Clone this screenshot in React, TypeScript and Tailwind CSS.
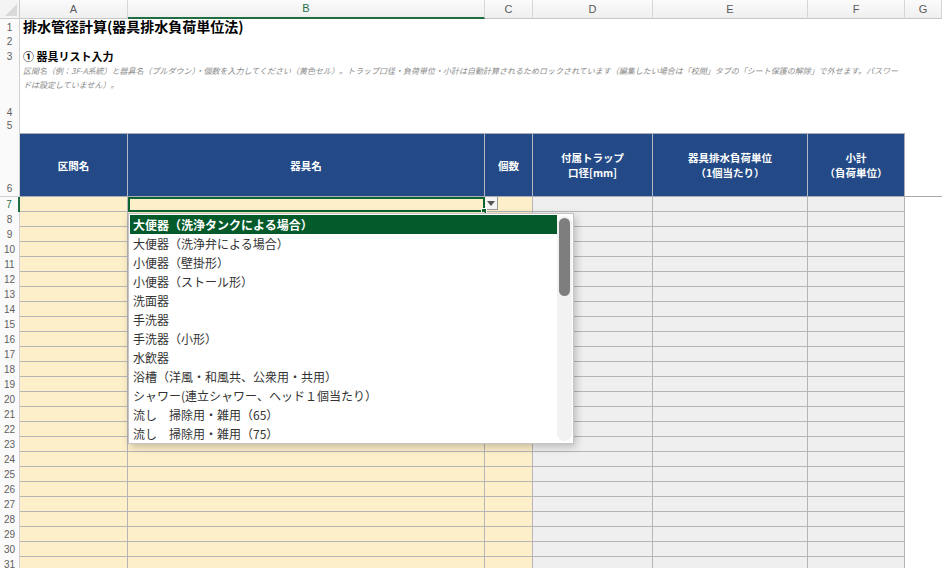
import React from "react";

const COLS = "grid grid-cols-[20px_108px_357px_48px_120px_155px_97px_1fr]";

const letters = ["A", "B", "C", "D", "E", "F", "G"];

const fixtures = [
  "大便器（洗浄タンクによる場合）",
  "大便器（洗浄弁による場合）",
  "小便器（壁掛形）",
  "小便器（ストール形）",
  "洗面器",
  "手洗器",
  "手洗器（小形）",
  "水飲器",
  "浴槽（洋風・和風共、公衆用・共用）",
  "シャワー(連立シャワー、ヘッド１個当たり）",
  "流し　掃除用・雑用（65）",
  "流し　掃除用・雑用（75）",
];

const bodyRows = Array.from({ length: 25 }, (_, i) => i + 7);

function RowNum({ n, active }: { n: number; active?: boolean }) {
  return (
    <div
      className={
        "flex items-end justify-center pb-[1px] bg-[#fafafa] text-[10px] leading-[12px] font-['Liberation_Sans',sans-serif] " +
        (active
          ? "border-r-2 border-[#1e6e42] text-[#1e7145]"
          : "border-r border-[#cfcfcf] text-[#5f5f5f]")
      }
    >
      {n}
    </div>
  );
}

function ColumnHeader() {
  return (
    <div className={COLS + " h-[17px]"}>
      <div className="relative border-r border-b border-[#cdcdcd] bg-[#f4f4f4]">
        <svg className="absolute right-[2px] bottom-[2px]" width="12" height="12" viewBox="0 0 12 12">
          <polygon points="12,0 12,12 0,12" fill="#d9d9d9" />
        </svg>
      </div>
      {letters.map((l) => (
        <div
          key={l}
          className={
            "flex items-center justify-center bg-gradient-to-b from-[#fbfbfb] to-[#efefef] border-r border-[#d6d6d6] text-[11px] font-['Liberation_Sans',sans-serif] " +
            (l === "B"
              ? "border-b-2 border-b-[#1e6e42] text-[#1e7145]"
              : "border-b border-b-[#c6c6c6] text-[#5a5a5a]")
          }
        >
          {l}
        </div>
      ))}
    </div>
  );
}

function HeadCell({ lines, last }: { lines: string[]; last?: boolean }) {
  return (
    <div
      className={
        "flex flex-col items-center justify-center bg-[#234a86] border-t border-b border-[#a9adb5] text-white text-[10.5px] leading-[15px] font-bold " +
        (last ? "border-r border-r-[#a9adb5]" : "border-r border-r-[#b3b7bf]")
      }
    >
      {lines.map((t) => (
        <span key={t}>{t}</span>
      ))}
    </div>
  );
}

function Dropdown() {
  return (
    <div className="absolute left-[128px] top-[213px] flex h-[231px] w-[446px] border border-[#c4c4c4] bg-white shadow-[2px_3px_8px_rgba(0,0,0,0.22)]">
      <div className="flex flex-1 flex-col overflow-hidden pl-[1px] pt-[1px]">
        {fixtures.map((f, i) => (
          <div
            key={f}
            className={
              "flex h-[19px] shrink-0 items-center pl-[3px] text-[12px] " +
              (i === 0 ? "bg-[#045a2a] font-bold text-white" : "text-[#333333]")
            }
          >
            {f}
          </div>
        ))}
      </div>
      <div className="mr-[1px] mt-[2px] mb-[2px] flex w-[15px] flex-col items-center rounded-full bg-[#f2f2f2] pt-[2px]">
        <div className="h-[78px] w-[11px] rounded-full bg-[#7e7e7e]" />
      </div>
    </div>
  );
}

export default function App() {
  return (
    <div className="relative h-[568px] w-[942px] overflow-hidden bg-white font-['Noto_Sans_CJK_JP','Noto_Sans',sans-serif] text-[#111]">
      <ColumnHeader />

      {/* rows 1-5: title block, no gridlines */}
      <div className={COLS + " h-[18px]"}>
        <RowNum n={1} />
        <div className="col-span-7 flex items-center pl-[3px] text-[14px] font-bold leading-none text-black">
          排水管径計算(器具排水負荷単位法)
        </div>
      </div>
      <div className={COLS + " h-[14px]"}>
        <RowNum n={2} />
        <div className="col-span-7" />
      </div>
      <div className={COLS + " h-[15px]"}>
        <RowNum n={3} />
        <div className="col-span-7 flex items-center pl-[3px] text-[11px] font-bold leading-none text-black">
          ① 器具リスト入力
        </div>
      </div>
      <div className={COLS + " h-[56px]"}>
        <RowNum n={4} />
        <div className="col-span-7 whitespace-nowrap pl-[3px] text-[8px] italic leading-[14px] text-[#8c8c8c]">
          区間名（例：3F-A系統）と器具名（プルダウン）・個数を入力してください（黄色セル）。トラップ口径・負荷単位・小計は自動計算されるためロックされています（編集したい場合は「校閲」タブの「シート保護の解除」で外せます。パスワー
          <br />
          ドは設定していません）。
        </div>
      </div>
      <div className={COLS + " h-[13px]"}>
        <RowNum n={5} />
        <div className="col-span-7" />
      </div>

      {/* row 6: table header */}
      <div className={COLS + " h-[64px]"}>
        <div className="flex items-end justify-center border-r border-b border-[#cfcfcf] bg-[#fafafa] pb-[1px] text-[10px] leading-[12px] text-[#5f5f5f] font-['Liberation_Sans',sans-serif]">
          6
        </div>
        <HeadCell lines={["区間名"]} />
        <HeadCell lines={["器具名"]} />
        <HeadCell lines={["個数"]} />
        <HeadCell lines={["付属トラップ", "口径[mm]"]} />
        <HeadCell lines={["器具排水負荷単位", "（1個当たり）"]} />
        <HeadCell lines={["小計", "（負荷単位）"]} last />
        <div className="border-b border-[#a9a9a9]" />
      </div>

      {/* rows 7-31 */}
      {bodyRows.map((n) => (
        <div key={n} className={COLS + " h-[15px]"}>
          <RowNum n={n} active={n === 7} />
          <div className="border-r border-b border-[#b5b5b5] bg-[#fdefc9]" />
          <div className="relative border-r border-b border-[#b5b5b5] bg-[#fdefc9]">
            {n === 7 && (
              <div className="absolute left-0 top-0 right-[-1px] bottom-[-1px] border-2 border-[#0d6331]">
                <div className="absolute right-[-4px] bottom-[-4px] h-[6px] w-[6px] border border-white bg-[#0d6331]" />
              </div>
            )}
          </div>
          <div className="border-r border-b border-[#b5b5b5] bg-[#fdefc9]">
            {n === 7 && (
              <div className="flex h-[13px] w-[13px] items-center justify-center border-r border-b border-[#9a9a9a] bg-[#f4f4f4]">
                <svg width="8" height="5" viewBox="0 0 8 5">
                  <polygon points="0,0 8,0 4,5" fill="#555" />
                </svg>
              </div>
            )}
          </div>
          <div className="border-r border-b border-[#b5b5b5] bg-[#efefef]" />
          <div className="border-r border-b border-[#b5b5b5] bg-[#efefef]" />
          <div className="border-r border-b border-[#b5b5b5] bg-[#efefef]" />
          <div />
        </div>
      ))}

      <Dropdown />
    </div>
  );
}
